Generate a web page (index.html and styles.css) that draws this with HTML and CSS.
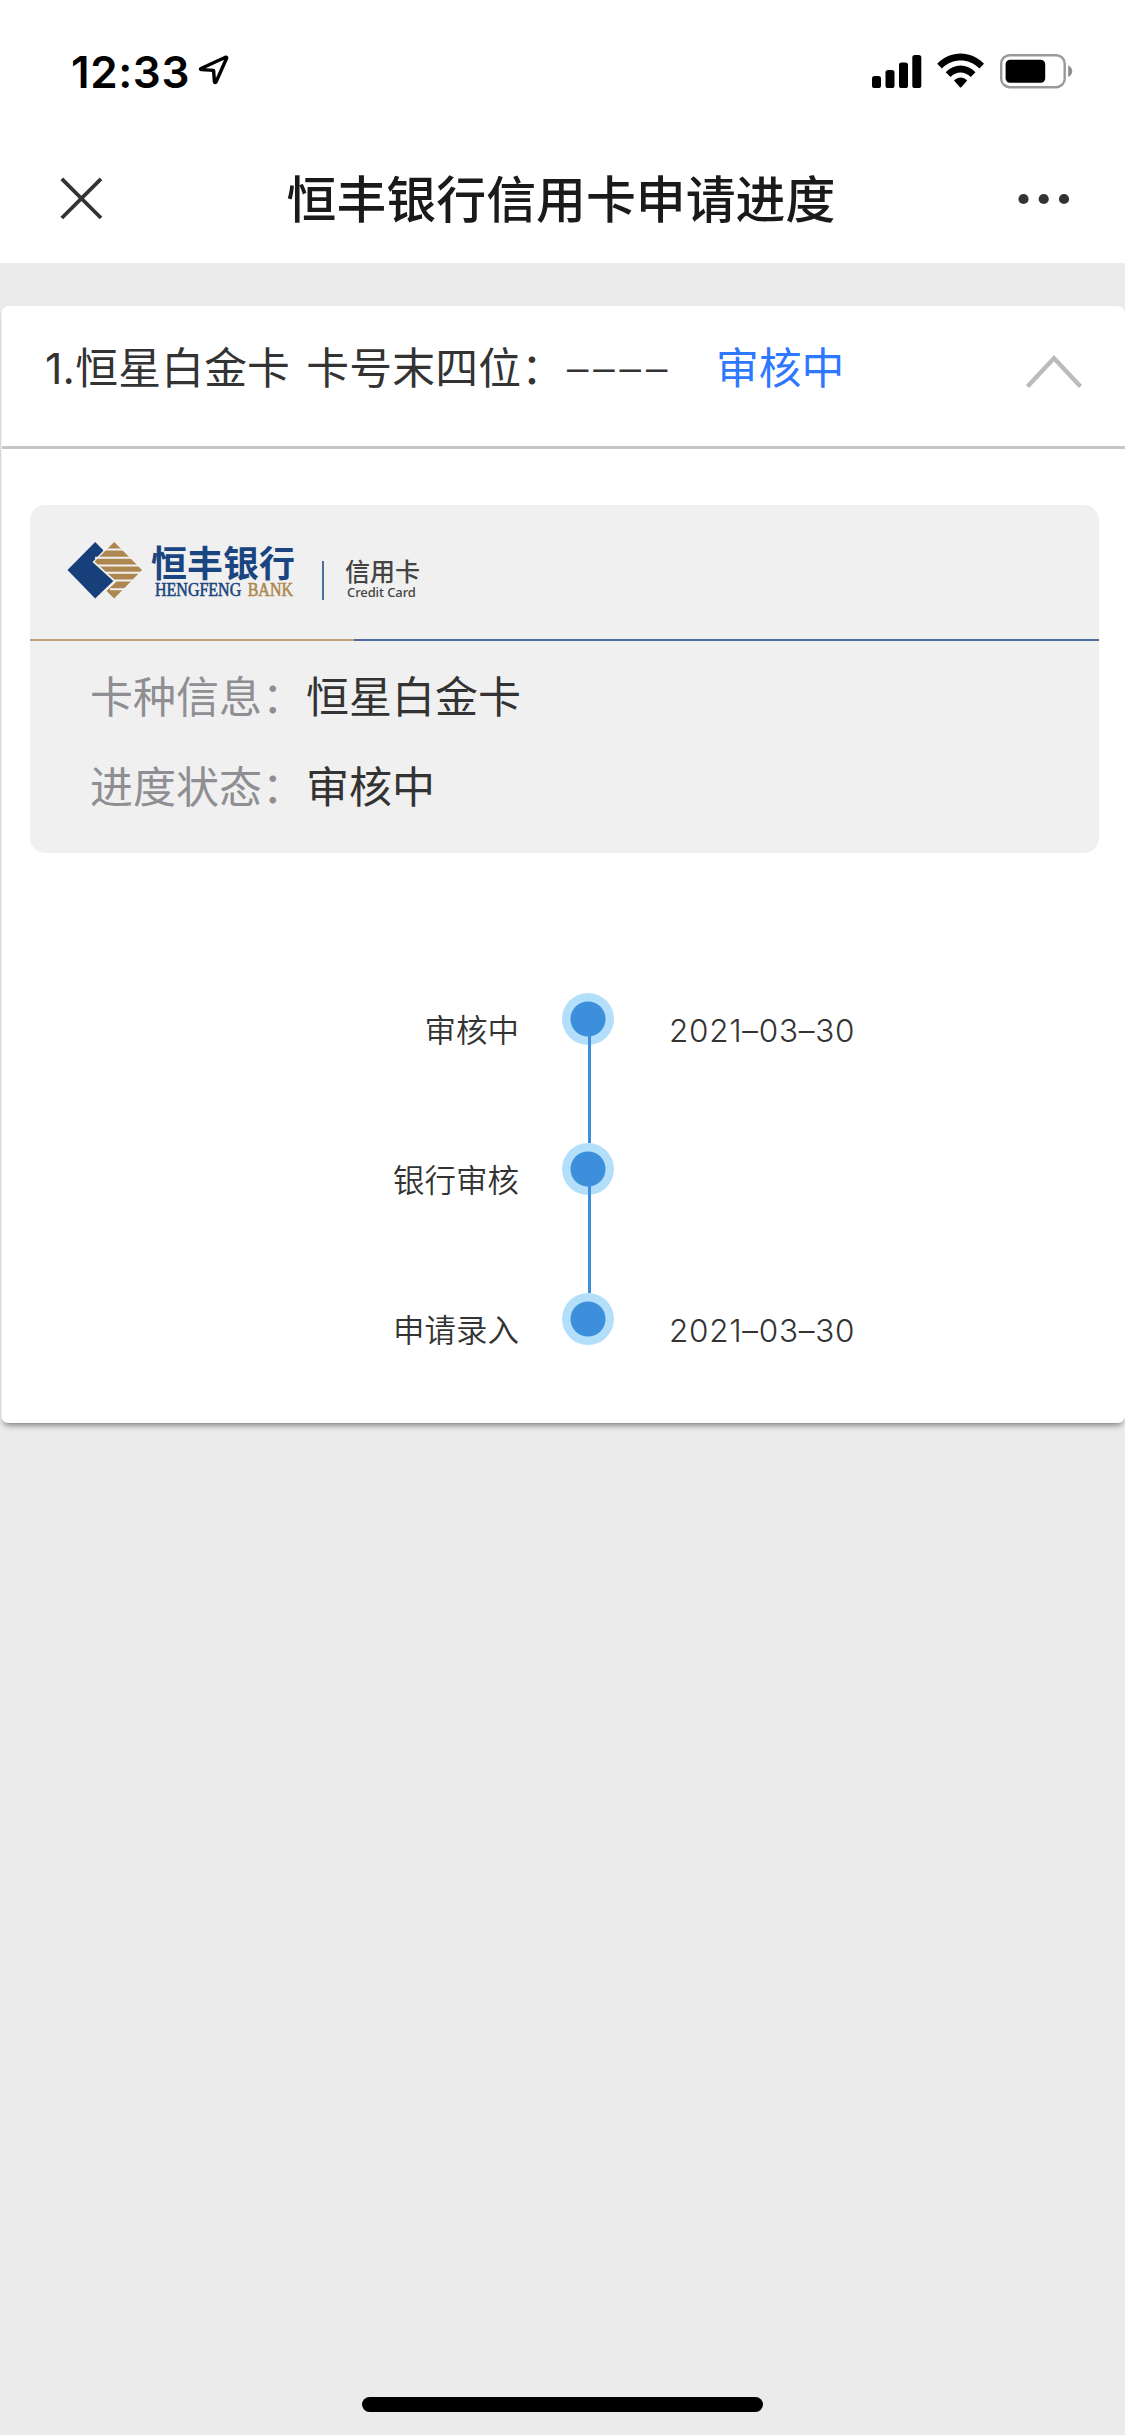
FILE: index.html
```html
<!DOCTYPE html>
<html lang="zh-CN">
<head>
<meta charset="utf-8">
<title>恒丰银行信用卡申请进度</title>
<link rel="stylesheet" href="styles.css">
</head>
<body>
<header class="top">
  <div class="status-bar">
    <div class="clock">
      <span class="time">12:33</span>
      <svg class="location" width="32" height="32" viewBox="0 0 32 32"><path d="M3 14.500 27.500 3.200Q29 2.800 28.600 4.200L18 28Q16.800 29.400 16.400 27.600L15.600 16.400 3.400 15.600Q1.800 15.200 3 14.500Z" fill="none" stroke="#000" stroke-width="3.400" stroke-linejoin="round"/></svg>
    </div>
    <svg class="indicators" width="202" height="38" viewBox="0 0 202 38">
      <rect x="0" y="24" width="9" height="12" rx="2.6"/>
      <rect x="13.5" y="18" width="9" height="18" rx="2.6"/>
      <rect x="27" y="10.500" width="9" height="25.500" rx="2.600"/>
      <rect x="40.300" y="3" width="9" height="33" rx="2.600"/>
      <path d="M65.200 11.800C78.500-1.800 98.700-1.800 112 11.800L107.300 16.400C96.700 5.900 80.500 5.900 69.900 16.400Z"/>
      <path d="M73.700 20.300C82.200 11.200 95 11.200 103.500 20.300L98.700 25C92.900 19 84.300 19 78.500 25Z"/>
      <path d="M82 28.500C85.900 24.500 91.300 24.500 95.200 28.500L89.500 35Q88.600 36 87.700 35Z"/>
      <rect x="129.200" y="3.200" width="63.500" height="32" rx="8.500" fill="none" stroke="#999" stroke-width="2.400"/>
      <rect x="133.600" y="7.800" width="39.600" height="23" rx="4.500"/>
      <path d="M196.200 13.500Q200.200 15.500 200.200 19.300T196.200 25Z" fill="#8c8c8c"/>
    </svg>
  </div>
  <div class="nav-bar">
    <svg class="close" width="44" height="44" viewBox="0 0 44 44"><path d="M1.800 1.800 41 41M41 1.800 1.800 41" stroke="#333" stroke-width="3.800"/></svg>
    <h1 class="title">恒丰银行信用卡申请进度</h1>
    <svg class="more" width="52" height="12" viewBox="0 0 52 12" fill="#333"><circle cx="5.500" cy="6" r="5.100"/><circle cx="25.700" cy="6" r="5.100"/><circle cx="46" cy="6" r="5.100"/></svg>
  </div>
</header>

<main class="card">
  <div class="card-head">
    <span class="card-name">1.恒星白金卡 卡号末四位：</span>
    <span class="digits">––––</span>
    <span class="card-status">审核中</span>
    <svg class="chevron" width="58" height="36" viewBox="0 0 58 36"><path d="M2.500 32.500 29 4.200 55.500 32.500" fill="none" stroke="#bbb" stroke-width="4.400"/></svg>
  </div>

  <section class="panel">
    <div class="brand">
      <svg class="mark" width="76" height="58" viewBox="0 0 76 58">
        <path d="M.500 29 28.200 1 36.500 9.500 25.500 21 46.300 40 28.200 57.500Z" fill="#173f7a"/>
        <path d="M47.200 1 75 29 47.200 57.500 39.500 50 49.500 40.500 27.500 20.500Z" fill="#ae8750"/>
        <path d="M36 8.500H58M28 16.800H68M31 24.500H76M39 31.800H76M48 39.500H70M43 48.200H60" stroke="#f0f0f0" stroke-width="2"/>
      </svg>
      <div class="bank">
        <div class="bank-cn">恒丰银行</div>
        <div class="bank-en"><span>HENGFENG</span><span class="gold">BANK</span></div>
      </div>
      <div class="bar"></div>
      <div class="product">
        <div class="product-cn">信用卡</div>
        <div class="product-en">Credit Card</div>
      </div>
    </div>
    <div class="rule"></div>
    <dl class="info">
      <div class="row"><dt>卡种信息：</dt><dd>恒星白金卡</dd></div>
      <div class="row"><dt>进度状态：</dt><dd>审核中</dd></div>
    </dl>
  </section>

  <ol class="timeline">
    <li class="step"><span class="label">审核中</span><i class="dot"></i><span class="date">2021–03–30</span></li>
    <li class="step"><span class="label">银行审核</span><i class="dot"></i><span class="date"></span></li>
    <li class="step"><span class="label">申请录入</span><i class="dot"></i><span class="date">2021–03–30</span></li>
  </ol>
</main>
<footer class="home"><div class="home-bar"></div></footer>
</body>
</html>
```
FILE: styles.css
```css
* { box-sizing: border-box; margin: 0; padding: 0; }
body {
  display: flex;
  flex-direction: column;
  min-height: 2435px;
  background: #ebebeb;
  color: #333;
  font-family: Inter, "Noto Sans CJK SC", sans-serif;
}
svg { display: block; flex: none; }
.top { height: 263px; background: #fff; }
.status-bar {
  display: flex;
  justify-content: space-between;
  height: 137px;
  padding: 52px 51px 0 71px;
}
.clock { display: flex; gap: 9px; }
.time { width: 118px; font-size: 44px; line-height: 40px; font-weight: 600; letter-spacing: .600px; color: #000; white-space: nowrap; }
.location { margin-top: 2px; }
.nav-bar {
  display: flex;
  align-items: center;
  justify-content: space-between;
  height: 124px;
  padding: 0 55px 0 60px;
}
.title { padding-top: 1px; font-size: 49.900px; line-height: 60px; font-weight: 500; color: #1a1a1a; }

.card {
  height: 1117px;
  margin: 43px 0 0 1px;
  background: #fff;
  border-left: 1px solid #f4f4f4;
  border-radius: 7px;
  box-shadow: 0 5px 6px -3px rgba(0, 0, 0, .5), 0 0 2px rgba(0, 0, 0, .05);
}
.card-head {
  display: flex;
  height: 143px;
  padding: 33px 42px 0 43px;
  border-bottom: 3px solid #c6c6c6;
  font-size: 42.800px;
  line-height: 60px;
  white-space: pre;
}
.card-name { width: 522px; word-spacing: 4px; letter-spacing: .200px; }
.digits { width: 149px; letter-spacing: 4.900px; font-weight: 350; }
.card-status { color: #2e77ff; }
.chevron { margin: 15px 0 0 auto; }

.panel {
  height: 348px;
  margin: 56px 26px 0 28px;
  background: #f0f0f0;
  border-radius: 15px;
}
.brand { display: flex; height: 134px; padding: 36px 37px 0; }
.bank { width: 145px; margin: 1px 0 0 8px; color: #1a4580; }
.bank-cn { font: 700 36px/38px "Noto Sans CJK SC", sans-serif; white-space: nowrap; }
.bank-en {
  display: flex;
  justify-content: space-between;
  width: 138px;
  margin: 1px 0 0 4px;
  font: 400 16px/18px "Liberation Serif", serif;
  -webkit-text-stroke: .5px currentColor;
  transform: scaleY(1.15);
  white-space: nowrap;
}
.gold { color: #ae8750; }
.bar { width: 2px; height: 39px; margin: 20px 22px 0 26px; background: #4c6f9f; }
.product { margin-top: 18px; color: #444; white-space: nowrap; }
.product-cn { margin-left: -1px; font-size: 25px; line-height: 26px; font-weight: 500; }
.product-en { margin: 0 0 0 1px; font: 500 13px/14px "Noto Sans", sans-serif; letter-spacing: -.100px; }
.rule { height: 2px; background: linear-gradient(90deg, #c0a177 324px, #4c6f9f 324px); }
.info { padding: 26px 60px 0; font-size: 43px; line-height: 60px; }
.row { display: flex; height: 90px; }
.row dt { width: 216px; color: #8e8e93; }

.timeline { margin-top: 140px; list-style: none; }
.step { display: flex; height: 150px; font-size: 31.500px; line-height: 52px; }
.label { width: 517px; padding-top: 12px; text-align: right; font-weight: 350; }
.dot {
  width: 52px;
  height: 52px;
  margin-left: 43px;
  border-radius: 50%;
  background: radial-gradient(circle, #3d8fdc 17px, #b3dffb 18px);
}
.dot::after { content: ""; display: block; width: 3px; height: 124px; margin: 26px 0 0 26px; background: #3d8fdc; }
.step:last-child .dot::after { display: none; }
.date { margin-left: 55px; padding-top: 12px; font-weight: 350; letter-spacing: .700px; }

.home { margin-top: auto; padding-bottom: 23px; }
.home-bar { width: 401px; height: 15px; margin: 0 auto; border-radius: 8px; background: #000; }
```
